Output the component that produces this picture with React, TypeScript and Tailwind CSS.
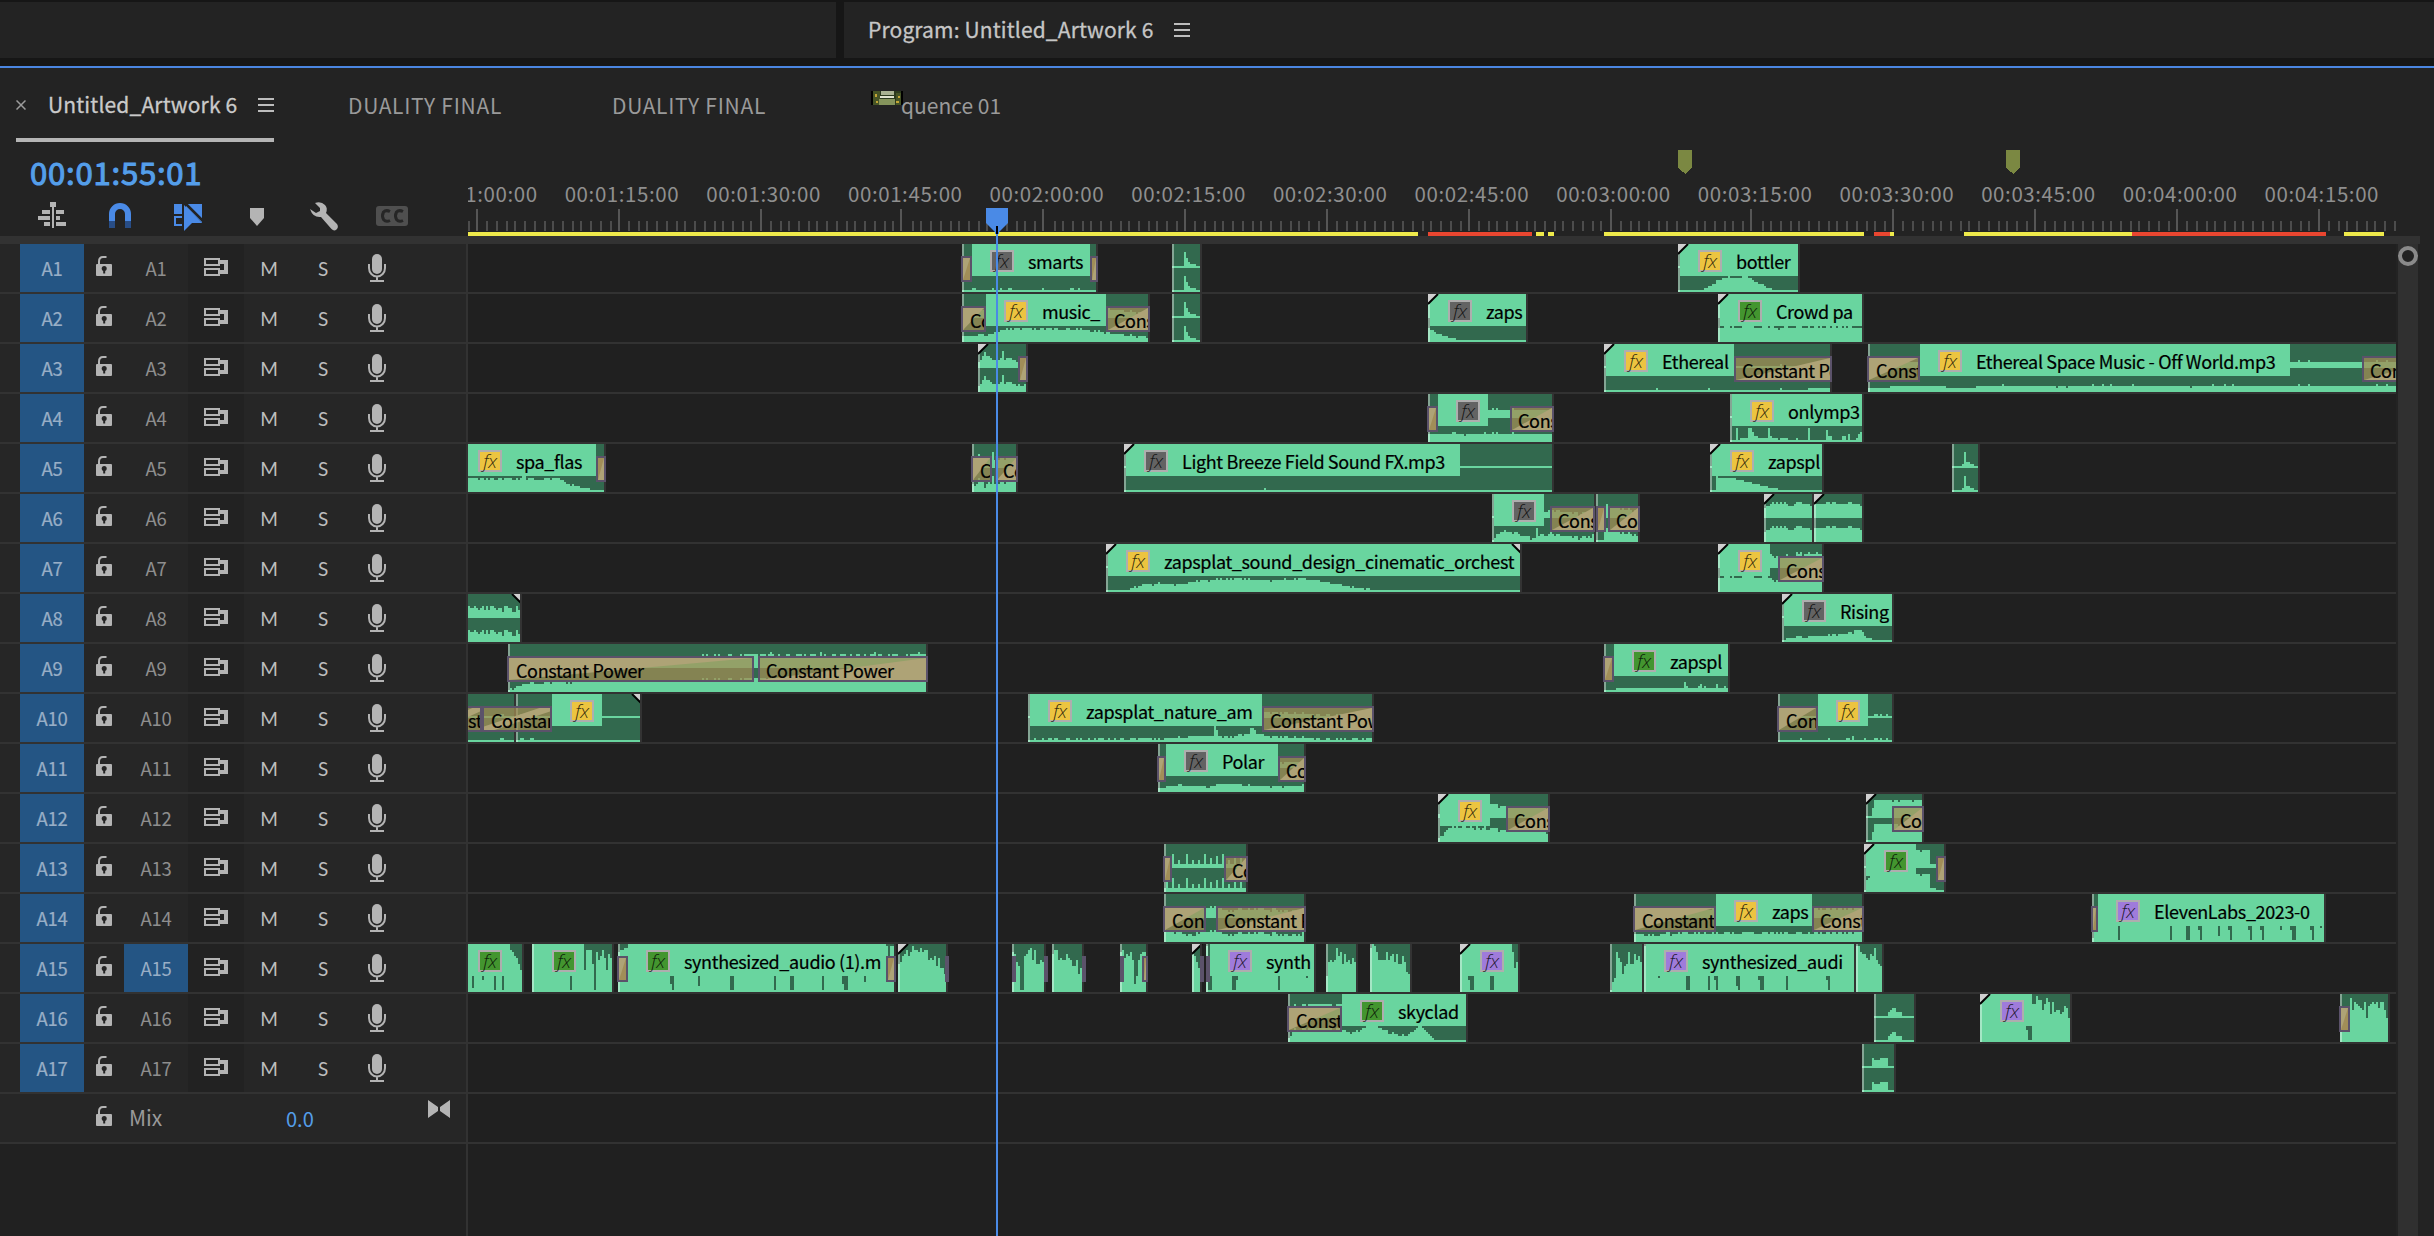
import React from "react";

const ORIGIN = 468;

type Fx = "y" | "g" | "n" | "p";
type Transition = { x: number; e: number; text?: string; out?: boolean; shift?: number; cross?: boolean };
type Clip = {
  x: number;
  e: number;
  label?: { x: number; e: number; text?: string; fx: Fx };
  tr?: Transition[];
  /** [page x, height] pairs, interpolated linearly */
  w: [number, number][];
  j?: number;
  /** [page x, width, height] overrides: spikes in a quiet wave, dips in a loud one */
  k?: [number, number, number][];
  mono?: boolean;
  fl?: boolean;
  fr?: boolean;
  cut?: boolean;
};

const spikeA: [number, number, number][] = [[1184, 2, 16], [1186, 2, 10], [1188, 2, 6], [1190, 6, 4]];

const TRACKS: Clip[][] = [
  [
    { x: 962, e: 1096, tr: [{ x: 961, e: 972 }, { x: 1090, e: 1098, out: true }], label: { x: 972, e: 1090, text: "smarts", fx: "n" }, w: [[962, 2]], k: [[972, 4, 4], [992, 2, 4], [1000, 2, 4], [1008, 4, 4], [1042, 2, 4], [1070, 4, 4], [1078, 2, 4]] },
    { x: 1172, e: 1200, w: [[1172, 2]], k: spikeA },
    { x: 1678, e: 1798, fl: true, label: { x: 1680, e: 1798, text: "bottler", fx: "y" }, w: [[1678, 2], [1702, 2], [1722, 14], [1746, 15], [1771, 2]], j: 1 },
  ],
  [
    { x: 962, e: 1148, tr: [{ x: 961, e: 986, text: "Con" }, { x: 1106, e: 1150, text: "Cons", out: true }], label: { x: 986, e: 1106, text: "music_", fx: "y" }, w: [[962, 6], [986, 7], [1000, 12], [1010, 13], [1080, 13], [1110, 9], [1148, 4]], j: 1 },
    { x: 1172, e: 1200, w: [[1172, 2]], k: spikeA },
    { x: 1428, e: 1526, fl: true, label: { x: 1430, e: 1526, text: "zaps", fx: "n" }, w: [[1428, 14], [1436, 8], [1444, 6], [1458, 2]] },
    { x: 1718, e: 1862, fl: true, label: { x: 1720, e: 1862, text: "Crowd pa", fx: "g" }, w: [[1718, 15], [1770, 15], [1776, 13], [1784, 15], [1850, 15], [1862, 13]], j: 1 },
  ],
  [
    { x: 978, e: 1026, fl: true, tr: [{ x: 1018, e: 1028, out: true }], w: [[978, 4], [984, 14], [991, 9], [1000, 8], [1007, 10], [1016, 6], [1026, 6]], j: 2, k: [[984, 2, 16], [1002, 2, 17]] },
    { x: 1604, e: 1830, fl: true, label: { x: 1606, e: 1734, text: "Ethereal", fx: "y" }, tr: [{ x: 1734, e: 1832, text: "Constant Po", out: true }], w: [[1604, 2], [1804, 2], [1808, 3], [1830, 4]], k: [[1656, 2, 4], [1708, 2, 4], [1780, 2, 4]] },
    { x: 1868, e: 2400, tr: [{ x: 1867, e: 1920, text: "Consta" }, { x: 2362, e: 2440, text: "Constan", out: true }], label: { x: 1920, e: 2290, text: "Ethereal Space Music - Off World.mp3", fx: "y" }, w: [[1868, 4], [1910, 6], [2396, 6]], k: [[1946, 30, 4], [2002, 2, 8], [2056, 2, 4], [2066, 2, 4], [2092, 2, 8], [2102, 2, 8], [2110, 2, 8], [2132, 2, 8], [2190, 2, 4], [2212, 2, 8], [2224, 2, 8], [2232, 2, 8], [2298, 2, 8], [2308, 2, 8], [2376, 2, 8], [2386, 2, 8]] },
  ],
  [
    { x: 1428, e: 1552, tr: [{ x: 1427, e: 1438 }, { x: 1510, e: 1554, text: "Const", out: true }], label: { x: 1438, e: 1488, fx: "n" }, w: [[1428, 8], [1552, 8]], k: [[1452, 4, 10], [1464, 2, 6], [1484, 2, 10], [1492, 2, 10], [1496, 2, 10], [1512, 2, 10]] },
    { x: 1730, e: 1862, label: { x: 1732, e: 1862, text: "onlymp3", fx: "y" }, w: [[1730, 2], [1740, 4], [1770, 4], [1800, 2], [1855, 2], [1862, 12]], j: 1, k: [[1736, 2, 14], [1748, 4, 14], [1752, 2, 10], [1754, 4, 6], [1768, 2, 14], [1770, 2, 6], [1808, 2, 14], [1826, 2, 12], [1828, 4, 6], [1842, 4, 6], [1848, 2, 8]] },
  ],
  [
    { x: 468, e: 604, cut: true, tr: [{ x: 596, e: 606, out: true }], label: { x: 460, e: 596, text: "spa_flas", fx: "y" }, w: [[468, 13], [560, 13], [566, 9], [580, 4], [594, 2]], j: 1, k: [[522, 4, 16]] },
    { x: 972, e: 1016, tr: [{ x: 971, e: 992, text: "Con" }, { x: 995, e: 1018, text: "Con", out: true }], w: [[972, 8], [1016, 10]], j: 2, k: [[978, 2, 14], [984, 2, 4], [991, 2, 16]] },
    { x: 1124, e: 1552, fl: true, label: { x: 1126, e: 1460, text: "Light Breeze Field Sound FX.mp3", fx: "n" }, w: [[1124, 2]], k: [[1264, 2, 4]] },
    { x: 1710, e: 1822, fl: true, label: { x: 1712, e: 1822, text: "zapspl", fx: "y" }, w: [[1710, 2], [1714, 2], [1716, 15], [1730, 14], [1750, 9], [1766, 5], [1781, 2]] },
    { x: 1952, e: 1978, w: [[1952, 2]], k: [[1962, 2, 4], [1964, 2, 16], [1966, 4, 6], [1970, 4, 4]] },
  ],
  [
    { x: 1492, e: 1594, tr: [{ x: 1550, e: 1595, text: "Const", out: true }], label: { x: 1494, e: 1544, fx: "n" }, w: [[1492, 2], [1498, 8], [1504, 11], [1514, 10], [1522, 6], [1530, 4], [1545, 8], [1560, 8], [1580, 4], [1594, 6]], j: 2, k: [[1536, 2, 14]] },
    { x: 1596, e: 1638, tr: [{ x: 1596, e: 1606, out: true }, { x: 1608, e: 1640, text: "Co", out: true }], w: [[1596, 2], [1602, 3], [1604, 11], [1628, 9], [1638, 5]], j: 1, k: [[1606, 2, 14]] },
    { x: 1764, e: 1812, fl: true, w: [[1764, 10], [1772, 15], [1784, 15], [1790, 13], [1798, 15], [1806, 14], [1812, 11]], j: 1 },
    { x: 1814, e: 1862, fl: true, w: [[1814, 13], [1822, 15], [1834, 15], [1840, 13], [1848, 15], [1856, 14], [1862, 11]], j: 1 },
  ],
  [
    { x: 1106, e: 1520, fl: true, fr: true, label: { x: 1108, e: 1520, text: "zapsplat_sound_design_cinematic_orchest", fx: "y" }, w: [[1106, 2], [1122, 2], [1140, 6], [1160, 9], [1180, 7], [1198, 11], [1240, 14], [1270, 11], [1300, 14], [1325, 10], [1350, 5], [1371, 2]], j: 1 },
    { x: 1718, e: 1822, fl: true, label: { x: 1720, e: 1770, fx: "y" }, tr: [{ x: 1778, e: 1824, text: "Const", out: true }], w: [[1718, 15], [1768, 15], [1772, 10], [1778, 12], [1806, 15], [1822, 13]], j: 2 },
  ],
  [
    { x: 468, e: 520, cut: true, fr: true, w: [[468, 10], [520, 9]], j: 3 },
    { x: 1782, e: 1892, fl: true, label: { x: 1784, e: 1892, text: "Rising", fx: "n" }, w: [[1782, 2], [1792, 5], [1840, 7], [1852, 9], [1854, 12], [1861, 12], [1864, 6], [1872, 2]], j: 1 },
  ],
  [
    { x: 508, e: 926, tr: [{ x: 507, e: 754, text: "Constant Power" }, { x: 758, e: 928, text: "Constant Power", out: true }], w: [[508, 2], [516, 5], [530, 9], [600, 10], [690, 11], [700, 13], [926, 13]], j: 1, k: [[754, 4, 14], [770, 2, 16], [820, 2, 16], [874, 2, 16], [918, 2, 16]] },
    { x: 1604, e: 1728, tr: [{ x: 1603, e: 1614 }], label: { x: 1614, e: 1728, text: "zapspl", fx: "g" }, w: [[1604, 2], [1614, 2], [1616, 4], [1680, 4], [1728, 5]], j: 1, k: [[1684, 2, 10], [1700, 2, 8], [1716, 2, 8]] },
  ],
  [
    { x: 468, e: 514, cut: true, w: [[468, 2]], k: [[500, 4, 4]] },
    { x: 516, e: 640, fr: true, tr: [{ x: 430, e: 482, text: "st", shift: 36, cross: true }, { x: 482, e: 552, text: "Constant", cross: true }], label: { x: 552, e: 602, fx: "y" }, w: [[516, 2]], k: [[520, 4, 4], [530, 4, 4]] },
    { x: 1028, e: 1372, label: { x: 1030, e: 1262, text: "zapsplat_nature_am", fx: "y" }, tr: [{ x: 1262, e: 1374, text: "Constant Powe", out: true }], w: [[1028, 2], [1050, 3], [1160, 3], [1184, 5], [1208, 6], [1230, 5], [1246, 8], [1260, 8], [1272, 5], [1306, 5], [1312, 3], [1372, 3]], j: 1, k: [[1214, 2, 16], [1216, 2, 12], [1250, 4, 14], [1254, 2, 12]] },
    { x: 1778, e: 1892, tr: [{ x: 1777, e: 1818, text: "Cons" }], label: { x: 1818, e: 1868, fx: "y" }, w: [[1778, 2]], k: [[1800, 2, 4], [1828, 2, 4], [1846, 4, 4], [1852, 2, 6], [1864, 2, 4], [1874, 4, 4], [1880, 2, 4], [1886, 2, 4]] },
  ],
  [
    { x: 1158, e: 1304, tr: [{ x: 1157, e: 1166 }, { x: 1278, e: 1306, text: "Con", out: true }], label: { x: 1166, e: 1278, text: "Polar", fx: "n" }, w: [[1158, 4], [1180, 7], [1204, 5], [1228, 9], [1270, 5], [1304, 7]], j: 1 },
  ],
  [
    { x: 1438, e: 1548, fl: true, label: { x: 1440, e: 1490, fx: "y" }, tr: [{ x: 1506, e: 1550, text: "Const", out: true }], w: [[1438, 4], [1450, 14], [1490, 14], [1500, 11], [1520, 12], [1548, 10]], j: 2 },
    { x: 1866, e: 1922, fl: true, tr: [{ x: 1892, e: 1924, text: "Co", out: true }], w: [[1866, 2], [1871, 2], [1872, 10], [1874, 18], [1922, 18]], k: [[1892, 2, 16], [1898, 2, 16], [1912, 2, 16]] },
  ],
  [
    { x: 1164, e: 1246, tr: [{ x: 1163, e: 1172 }, { x: 1224, e: 1248, text: "Con", out: true }], w: [[1164, 4], [1246, 4]], j: 1, k: [[1166, 2, 12], [1172, 2, 14], [1178, 2, 8], [1186, 2, 14], [1192, 2, 8], [1198, 2, 8], [1204, 2, 14], [1210, 2, 10], [1216, 2, 12], [1222, 2, 14], [1228, 2, 8], [1234, 2, 12], [1240, 2, 10]] },
    { x: 1864, e: 1944, fl: true, label: { x: 1866, e: 1916, fx: "g" }, tr: [{ x: 1936, e: 1946, out: true }], w: [[1864, 2], [1865, 2], [1866, 12], [1870, 16], [1872, 18], [1929, 18], [1930, 4], [1934, 4], [1936, 2]], k: [[1920, 2, 16]] },
  ],
  [
    { x: 1164, e: 1304, tr: [{ x: 1163, e: 1206, text: "Con" }, { x: 1216, e: 1306, text: "Constant Po", out: true }], w: [[1164, 11], [1180, 9], [1190, 6], [1206, 11], [1214, 11], [1228, 7], [1244, 10], [1262, 9], [1280, 7], [1304, 9]], j: 2, k: [[1210, 2, 12], [1214, 2, 12]] },
    { x: 1634, e: 1862, tr: [{ x: 1633, e: 1716, text: "Constant" }, { x: 1812, e: 1864, text: "Consta", out: true }], label: { x: 1716, e: 1812, text: "zaps", fx: "y" }, w: [[1634, 7], [1700, 9], [1862, 9]], j: 2 },
    { x: 2092, e: 2324, mono: true, tr: [{ x: 2091, e: 2098 }], label: { x: 2098, e: 2324, text: "ElevenLabs_2023-0", fx: "p" }, w: [[2092, 4], [2098, 46], [2324, 46]], k: [[2118, 2, 2], [2170, 2, 2], [2186, 4, 2], [2198, 2, 12], [2200, 2, 2], [2218, 2, 6], [2228, 2, 12], [2230, 2, 2], [2248, 2, 12], [2250, 2, 2], [2260, 2, 12], [2262, 2, 2], [2280, 2, 12], [2290, 2, 12], [2292, 4, 2], [2310, 2, 12], [2312, 2, 2], [2320, 2, 14]] },
  ],
  [
    { x: 468, e: 522, cut: true, mono: true, label: { x: 460, e: 510, fx: "g" }, w: [[468, 46], [510, 42], [516, 34], [519, 24], [522, 18]], k: [[472, 2, 4], [482, 2, 12], [494, 2, 2], [502, 2, 2]] },
    { x: 532, e: 612, mono: true, label: { x: 534, e: 584, fx: "g" }, w: [[532, 46], [584, 40], [612, 36]], j: 6, k: [[570, 2, 2], [584, 2, 22], [592, 2, 28], [594, 2, 2], [606, 2, 22]] },
    { x: 618, e: 894, mono: true, tr: [{ x: 617, e: 628 }, { x: 886, e: 896, out: true }], label: { x: 628, e: 886, text: "synthesized_audio (1).m", fx: "g" }, w: [[618, 40], [628, 46], [894, 46]], k: [[670, 2, 8], [672, 2, 2], [698, 2, 6], [730, 4, 2], [774, 2, 2], [790, 4, 2], [822, 2, 2], [842, 2, 8], [844, 4, 2], [864, 2, 10], [888, 2, 28]] },
    { x: 898, e: 946, mono: true, fl: true, tr: [{ x: 945, e: 948 }], w: [[898, 34], [906, 40], [928, 38], [938, 28], [942, 18], [946, 6]], j: 6 },
    { x: 1012, e: 1044, mono: true, tr: [{ x: 1012, e: 1014 }, { x: 1044, e: 1046 }], w: [[1012, 40], [1014, 38], [1020, 10], [1024, 30], [1028, 40], [1036, 34], [1044, 26]], j: 7, k: [[1020, 3, 2]] },
    { x: 1052, e: 1082, mono: true, tr: [{ x: 1082, e: 1084 }], w: [[1052, 38], [1058, 36], [1070, 32], [1082, 20]], j: 7 },
    { x: 1120, e: 1146, mono: true, tr: [{ x: 1120, e: 1123 }, { x: 1142, e: 1148, out: true }], w: [[1120, 40], [1128, 38], [1136, 24], [1146, 40]], j: 8, k: [[1134, 2, 8]] },
    { x: 1192, e: 1200, mono: true, fl: true, tr: [{ x: 1200, e: 1202 }], w: [[1192, 42], [1196, 30], [1200, 18]] },
    { x: 1206, e: 1314, mono: true, tr: [{ x: 1206, e: 1209 }], label: { x: 1210, e: 1314, text: "synth", fx: "p" }, w: [[1206, 46], [1314, 46]], k: [[1208, 4, 2], [1232, 4, 2], [1236, 2, 12], [1278, 2, 2], [1306, 2, 14]] },
    { x: 1326, e: 1356, mono: true, w: [[1326, 12], [1329, 34], [1336, 38], [1350, 32], [1356, 28]], j: 7 },
    { x: 1370, e: 1410, mono: true, w: [[1370, 40], [1386, 34], [1402, 30], [1410, 16]], j: 8 },
    { x: 1460, e: 1518, mono: true, fl: true, label: { x: 1462, e: 1512, fx: "p" }, w: [[1460, 46], [1512, 40], [1518, 26]], k: [[1468, 2, 12], [1470, 4, 2], [1490, 4, 2], [1513, 2, 24]] },
    { x: 1610, e: 1642, mono: true, w: [[1610, 2], [1613, 2], [1615, 40], [1624, 34], [1634, 32], [1642, 26]], j: 8, k: [[1622, 2, 18]] },
    { x: 1644, e: 1854, mono: true, label: { x: 1646, e: 1854, text: "synthesized_audi", fx: "p" }, w: [[1644, 46], [1854, 46]], k: [[1658, 2, 14], [1686, 4, 2], [1708, 2, 2], [1714, 2, 12], [1716, 2, 2], [1736, 2, 6], [1738, 2, 2], [1758, 2, 12], [1760, 4, 2], [1786, 2, 2], [1826, 2, 12], [1828, 2, 2]] },
    { x: 1856, e: 1882, mono: true, w: [[1856, 44], [1862, 34], [1874, 38], [1882, 28]], j: 6 },
  ],
  [
    { x: 1288, e: 1466, tr: [{ x: 1287, e: 1342, text: "Const" }], label: { x: 1342, e: 1466, text: "skyclad", fx: "g" }, w: [[1288, 4], [1294, 13], [1320, 14], [1342, 13], [1350, 8], [1358, 11], [1368, 16], [1378, 15], [1388, 9], [1404, 6], [1414, 12], [1418, 16], [1422, 14], [1430, 6], [1437, 2]], j: 1 },
    { x: 1874, e: 1914, w: [[1874, 2]], k: [[1888, 2, 6], [1890, 2, 8], [1892, 4, 10], [1896, 6, 6]] },
    { x: 1980, e: 2070, mono: true, fl: true, label: { x: 1982, e: 2032, fx: "p" }, w: [[1980, 46], [2034, 40], [2050, 36], [2060, 28], [2066, 38], [2070, 16]], j: 8, k: [[2026, 2, 12], [2028, 4, 2]] },
    { x: 2340, e: 2388, mono: true, tr: [{ x: 2339, e: 2350 }], w: [[2340, 4], [2344, 30], [2350, 38], [2364, 34], [2384, 38], [2388, 10]], j: 7, k: [[2366, 2, 24]] },
  ],
  [{ x: 1862, e: 1894, w: [[1862, 2]], k: [[1872, 2, 10], [1874, 6, 8], [1880, 8, 10]] }],
];

const noise = (n: number) => {
  const v = Math.sin(n * 127.1 + 11.7) * 43758.5453;
  return (v - Math.floor(v)) * 2 - 1;
};

function heightAt(c: Clip, x: number) {
  for (const [kx, kw, kh] of c.k ?? []) if (x >= kx && x < kx + kw) return kh;
  const p = c.w;
  let h = p[p.length - 1][1];
  if (x <= p[0][0]) h = p[0][1];
  else
    for (let i = 1; i < p.length; i++)
      if (x <= p[i][0]) {
        const [x0, h0] = p[i - 1];
        const [x1, h1] = p[i];
        h = h0 + ((h1 - h0) * (x - x0)) / (x1 - x0);
        break;
      }
  if (c.j) h += noise(x) * c.j;
  return Math.max(2, Math.round(h / 2) * 2);
}

function wavePath(c: Clip, base: number) {
  let d = `M0 ${base}`;
  for (let x = c.x; x < c.e; x += 2) {
    const y = base - heightAt(c, x);
    d += `V${y}H${Math.min(x + 2, c.e) - c.x}`;
  }
  return d + `V${base}Z`;
}

const FX_BG: Record<Fx, string> = { y: "bg-[#ecc440]", g: "bg-[#43952f]", n: "bg-[#636363]", p: "bg-[#9f7bdb]" };

function TransitionBox({ t }: { t: Transition }) {
  const w = t.e - t.x;
  const tan = "#aea376";
  return (
    <div className="absolute top-3 h-[26px] overflow-hidden border-2 border-[#5b526a]" style={{ left: t.x - ORIGIN, width: w }}>
      {w > 4 && (
        <svg className="absolute inset-0 h-full w-full" viewBox="0 0 100 100" preserveAspectRatio="none">
          <rect width="100" height="100" fill={w < 14 ? "#a18e58" : "rgba(163,141,84,.73)"} />
          {t.cross ? (
            <path d="M0 84L84 0H100V16L16 100H0Z" fill={tan} />
          ) : (
            <path d={t.out ? "M0 100L100 0V100Z" : "M0 0H100L0 100Z"} fill={tan} />
          )}
        </svg>
      )}
      {t.text && (
        <span
          className="relative block text-[18px] leading-[25px] tracking-[-0.02em] whitespace-nowrap text-black [-webkit-text-stroke:0.2px_#000]"
          style={{ marginLeft: t.shift ?? (t.out ? 6 : 7) }}
        >
          {t.text}
        </span>
      )}
    </div>
  );
}

function ClipView({ c }: { c: Clip }) {
  const w = c.e - c.x;
  const l = c.label;
  return (
    <>
      <div className="absolute top-0 h-12 bg-[#32694e]" style={{ left: c.x - ORIGIN, width: w }}>
        <svg className="absolute inset-0" width={w} height="48" shapeRendering="crispEdges" fill="#69d59f">
          {!c.mono && <path d={wavePath(c, 24)} />}
          <path d={wavePath(c, 48)} />
        </svg>
        {l && (
          <div className="absolute top-0 h-8 overflow-hidden bg-[#69d59f]" style={{ left: Math.max(l.x, c.x) - c.x, width: l.e - Math.max(l.x, c.x) }}>
            <div className="flex h-8 items-start pt-[6px]" style={{ marginLeft: 18 + Math.min(0, l.x - c.x) }}>
              <span className={`flex h-[22px] w-6 shrink-0 items-center justify-center border-2 border-[#aeaeae] font-[Open_Sans] text-[19px] leading-none font-light tracking-[-0.02em] text-black/80 italic ${FX_BG[l.fx]}`}>
                fx
              </span>
              {l.text && (
                <span className="-mt-[2px] ml-[14px] text-[18px] leading-[26px] tracking-[-0.02em] whitespace-nowrap text-black [-webkit-text-stroke:0.2px_#000]">
                  {l.text}
                </span>
              )}
            </div>
          </div>
        )}
        {!c.cut && <div className="absolute top-0 left-0 h-12 w-[2px] bg-white/40" />}
        {c.fl && (
          <svg className="absolute top-0 left-0" width="12" height="12">
            <path d="M0 0H10L0 10Z" fill="#cfcfcf" />
            <path d="M10 0L0 10" stroke="#000" strokeWidth="2" />
          </svg>
        )}
        {c.fr && (
          <svg className="absolute top-0 -right-[2px]" width="12" height="12">
            <path d="M2 0H12V10Z" fill="#cfcfcf" />
            <path d="M2 0L12 10" stroke="#000" strokeWidth="2" />
          </svg>
        )}
        <div className="absolute top-0 left-full h-12 w-[2px] bg-[#333]" />
      </div>
      {c.tr?.map((t, i) => <TransitionBox key={i} t={t} />)}
    </>
  );
}

const LockIcon = () => (
  <svg width="16" height="20" viewBox="0 0 16 20">
    <path d="M3 9V5.5Q3 1 7 1H10.5" fill="none" stroke="#b4b4b4" strokeWidth="2" />
    <rect y="8" width="16" height="12" rx="1" fill="#b4b4b4" />
    <circle cx="8.2" cy="12.6" r="2.5" fill="#232323" />
    <rect x="7.2" y="13" width="2" height="4.5" fill="#232323" />
  </svg>
);

const SyncIcon = () => (
  <svg width="24" height="18" viewBox="0 0 24 18" fill="none" stroke="#b4b4b4" strokeWidth="2">
    <path d="M1 1H15V7H1ZM1 11H15V17H1Z" />
    <path d="M16 2H24V16H16V12H20V6H16Z" fill="#b4b4b4" stroke="none" />
  </svg>
);

const MicIcon = () => (
  <svg width="18" height="28" viewBox="0 0 18 28">
    <rect x="4" width="10" height="20" rx="5" fill="#b4b4b4" />
    <path d="M1 10V14A8 8.5 0 0 0 17 14V10M9 22.500V26" fill="none" stroke="#b4b4b4" strokeWidth="2" />
    <rect x="2" y="26" width="14" height="2" fill="#b4b4b4" />
  </svg>
);

const Menu = () => (
  <div className="flex h-[14px] w-4 shrink-0 flex-col justify-between">
    <i className="h-[2px] bg-[#bdbdbd]" />
    <i className="h-[2px] bg-[#bdbdbd]" />
    <i className="h-[2px] bg-[#bdbdbd]" />
  </div>
);

function TrackHeader({ name, target }: { name: string; target?: boolean }) {
  return (
    <div className="flex h-[50px] w-[466px] items-stretch border-b-2 border-[#323232] bg-[#262626] text-[18.500px] tracking-[-0.01em] text-[#8e8e8e]">
      <div className="ml-5 flex w-16 items-center justify-center bg-[#245584] pt-px text-[#98aec6] [-webkit-text-stroke:0.2px_#98aec6]">{name}</div>
      <div className="flex w-10 pt-3 pl-3"><LockIcon /></div>
      <div className={`flex w-16 items-center justify-center pt-px ${target ? "bg-[#245584] text-[#98aec6]" : ""}`}>{name}</div>
      <div className="w-14 bg-[#222] pt-[14px] pl-4"><SyncIcon /></div>
      <div className="flex w-[50px] items-center justify-center pt-[2px] font-[Lato] text-[19px] text-[#bdbdbd]">M</div>
      <div className="ml-[4px] flex w-[50px] items-center justify-center pt-[2px] font-[Lato] text-[19px] text-[#bdbdbd]">S</div>
      <div className="ml-5 pt-[10px]"><MicIcon /></div>
    </div>
  );
}

const BAR: [number, number, "y" | "r"][] = [
  [468, 1418, "y"], [1428, 1532, "r"], [1536, 1544, "y"], [1548, 1554, "y"], [1604, 1864, "y"], [1874, 1890, "r"],
  [1890, 1894, "y"], [1964, 2132, "y"], [2132, 2326, "r"], [2344, 2384, "y"],
];

const LABELS = ["00:01:00:00", "00:01:15:00", "00:01:30:00", "00:01:45:00", "00:02:00:00", "00:02:15:00", "00:02:30:00", "00:02:45:00", "00:03:00:00", "00:03:15:00", "00:03:30:00", "00:03:45:00", "00:04:00:00", "00:04:15:00"];

function Ruler() {
  const minors: number[] = [];
  for (let i = -1; i < 205; i++) {
    const x = Math.round((9 + i * 9.4427) / 2) * 2;
    if (i % 15 !== 0 && x < 1928) minors.push(x);
  }
  return (
    <div className="relative h-24 w-[1932px] overflow-hidden">
      {LABELS.map((t, i) => (
        <span key={t} className="absolute top-[38px] text-[20.500px] leading-[30px] tracking-[0.029em] whitespace-nowrap text-[#8f8f8f]" style={{ left: 423 - ORIGIN + i * 141.65 }}>
          {t}
        </span>
      ))}
      <svg className="absolute inset-0" width="1932" height="96" shapeRendering="crispEdges">
        {LABELS.map((t, i) => <rect key={t} x={Math.round((8 + i * 141.64) / 2) * 2} y="69" width="2" height="22" fill="#565656" />)}
        {minors.map((x) => <rect key={x} x={x} y="81" width="2" height="10" fill="#4c4c4c" />)}
        {BAR.map(([a, b, c]) => <rect key={a} x={a - ORIGIN} y="92" width={b - a} height="4" fill={c === "y" ? "#efea4b" : "#ea4630"} />)}
        {[1678, 2006].map((x) => <path key={x} d={`M${x - ORIGIN} 10h14v18l-5 4l-2 2l-2 -2l-5 -4Z`} fill="#7b8842" />)}
      </svg>
    </div>
  );
}

function Tools() {
  return (
    <svg className="block" width="420" height="32" viewBox="0 0 420 32" fill="#b4b4b4">
      <path d="M50 2h6v5h-2v21h-2V7h-2ZM42 10h8v4h-8ZM56 10h8v4h-8ZM38 16h12v4H38ZM56 16h4v4h-4ZM44 22h6v4h-6ZM56 22h10v4H56Z" />
      <path d="M112 21V14a8 8 0 0 1 16 0V21" fill="none" stroke="#4a8ae6" strokeWidth="6" />
      <path d="M109 21h6v7h-6ZM125 21h6v7h-6Z" fill="#284d86" />
      <path d="M174 4h8v10h-8ZM186 4h16v19L186 8Z" fill="#4a8ae6" />
      <path d="M182 17h-7v8h7" fill="none" stroke="#4a8ae6" strokeWidth="2" />
      <path d="M186 4L203 21" stroke="#232323" strokeWidth="2.500" />
      <path d="M184 5L202 23H192L184 31Z" fill="#4a8ae6" />
      <path d="M250 8h14v10l-7 8l-7-8Z" />
      <path d="M315 3Q321 1 325 5Q328 8 326 13L337 24Q339 27 336.500 29.500Q334 31.500 331.500 29L321 17Q313 18 310 9L316 13L320 11V8Z" />
      <rect x="376" y="6" width="32" height="20" rx="3" fill="#4f4f4f" />
      <path d="M390 11.500Q386 9.500 383.500 12Q381.500 16 383.500 19.500Q386 22.500 390 20.500M403 11.500Q399 9.500 396.500 12Q394.500 16 396.500 19.500Q399 22.500 403 20.500" fill="none" stroke="#262626" strokeWidth="3" />
    </svg>
  );
}

export default function App() {
  return (
    <div className="flex h-[1236px] w-[2434px] flex-col overflow-hidden bg-[#161616] font-['Noto_Sans_CJK_SC',sans-serif] text-[#9a9a9a]">
      <div className="flex h-[66px] shrink-0 gap-2 pt-[2px] pb-2">
        <div className="w-[836px] bg-[#232323]" />
        <div className="flex flex-1 items-center bg-[#232323] pl-[24px]">
          <span className="-mt-[2px] w-[306px] text-[21px] leading-[30px] tracking-[0.007em] whitespace-nowrap text-[#c6c6c6] [-webkit-text-stroke:0.3px_#c6c6c6]">
            Program: Untitled_Artwork 6
          </span>
          <Menu />
        </div>
      </div>

      <div className="relative flex flex-1 flex-col border-t-2 border-[#4a85e0] bg-[#232323]">
        <div className="flex h-[72px] shrink-0 items-stretch text-[21px] leading-[30px] whitespace-nowrap">
          <div className="ml-4 flex h-[74px] w-[258px] shrink-0 items-center border-b-4 border-[#b5b5b5] pb-0">
            <svg width="10" height="10" viewBox="0 0 10 10" className="mt-1 shrink-0"><path d="M.5 .5L9.500 9.500M9.500 .5L.5 9.500" stroke="#9c9c9c" strokeWidth="1.500" /></svg>
            <span className="ml-[22px] w-[210px] pt-[2px] tracking-[0.008em] text-[#cacaca] [-webkit-text-stroke:0.3px_#cacaca]">Untitled_Artwork 6</span>
            <div className="mt-1"><Menu /></div>
          </div>
          <span className="ml-[74px] w-[264px] pt-[22px] tracking-[0.034em]">DUALITY FINAL</span>
          <span className="w-[259px] pt-[22px] tracking-[0.034em]">DUALITY FINAL</span>
          <svg width="32" height="14" viewBox="0 0 32 14" className="mt-[23px] shrink-0">
            <rect width="32" height="14" fill="#2c3a1e" />
            <path d="M2 0h7v14H2ZM25 2h5v12h-5Z" fill="#465426" />
            <path d="M10 0h13v4H10Z" fill="#a9b292" />
            <path d="M8 8h16v6H8Z" fill="#85945c" />
            <path d="M9 5h14v2H9Z" fill="#dfe3cf" />
            <path d="M4 3h2v3H4ZM27 5h2v2h-2ZM5 10h2v2H5ZM25 10h3v2h-3Z" fill="#c3a535" />
            <path d="M0 0h2v14H0ZM30 0h2v14h-2Z" fill="#000" />
          </svg>
          <span className="-ml-[2px] pt-[22px]">quence 01</span>
        </div>

        <div className="flex h-24 shrink-0">
          <div className="flex w-[468px] flex-col pt-[12px]">
            <span className="ml-[30px] text-[31px] leading-[40px] tracking-[0.026em] text-[#549eea] [-webkit-text-stroke:1.1px_#549eea]">00:01:55:01</span>
            <div className="mt-[8px]"><Tools /></div>
          </div>
          <Ruler />
        </div>

        <div className="h-2 w-[2420px] shrink-0 bg-[#323232]" />

        <div className="flex min-h-0 flex-1">
          <div className="flex w-[468px] shrink-0 flex-col border-r-2 border-[#323232] bg-[#212121]">
            {TRACKS.map((_, i) => <TrackHeader key={i} name={`A${i + 1}`} target={i === 14} />)}
            <div className="flex h-[50px] border-b-2 border-[#323232] bg-[#262626]">
              <div className="ml-24 w-[33px] pt-3"><LockIcon /></div>
              <span className="w-[157px] pt-[8px] text-[21px] leading-[30px]">Mix</span>
              <span className="w-[142px] pt-[10px] text-[20px] leading-[30px] text-[#549eea]">0.0</span>
              <svg width="22" height="18" viewBox="0 0 22 18" className="mt-[6px]" fill="#b4b4b4"><path d="M0 0L10 7V11L0 18ZM22 0L12 7V11L22 18Z" /></svg>
            </div>
          </div>
          <div className="w-[1928px] shrink-0 overflow-hidden bg-[#202020]">
            {TRACKS.map((clips, i) => (
              <div key={i} className="relative h-[50px] border-b-2 border-[#323232]">
                {clips.map((c) => <ClipView key={c.x} c={c} />)}
              </div>
            ))}
            <div className="h-[50px] border-b-2 border-[#323232]" />
          </div>
          <div className="ml-[2px] w-5 bg-[#303030] pt-[2px]">
            <div className="h-5 w-5 rounded-full border-4 border-[#8a8a8a] bg-[#232323]" />
          </div>
        </div>

        <div className="absolute top-[140px] bottom-0 left-[986px] flex w-[22px] flex-col items-center">
          <svg className="shrink-0" width="22" height="26" viewBox="0 0 22 26">
            <path d="M0 0H22V15L13 24V26H9V24L0 15Z" fill="#4a8ae6" />
            <path d="M10 18h2v8h-2Z" fill="#000" />
          </svg>
          <div className="w-[2px] flex-1 bg-[#4a8ae6]" />
        </div>
      </div>
    </div>
  );
}
